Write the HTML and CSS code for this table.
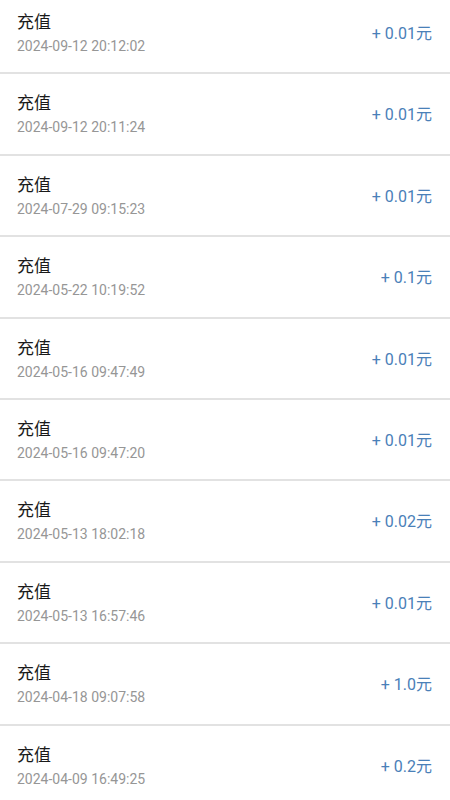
FILE: index.html
```html
<!DOCTYPE html>
<html lang="zh">
<head>
<meta charset="utf-8">
<title>充值记录</title>
<link rel="stylesheet" href="styles.css">
</head>
<body>
<ul class="list">
  <li class="row"><div class="info"><div class="title">充值</div><div class="date">2024-09-12 20:12:02</div></div><div class="amount">+ 0.01元</div></li>
  <li class="row"><div class="info"><div class="title">充值</div><div class="date">2024-09-12 20:11:24</div></div><div class="amount">+ 0.01元</div></li>
  <li class="row"><div class="info"><div class="title">充值</div><div class="date">2024-07-29 09:15:23</div></div><div class="amount">+ 0.01元</div></li>
  <li class="row"><div class="info"><div class="title">充值</div><div class="date">2024-05-22 10:19:52</div></div><div class="amount">+ 0.1元</div></li>
  <li class="row"><div class="info"><div class="title">充值</div><div class="date">2024-05-16 09:47:49</div></div><div class="amount">+ 0.01元</div></li>
  <li class="row"><div class="info"><div class="title">充值</div><div class="date">2024-05-16 09:47:20</div></div><div class="amount">+ 0.01元</div></li>
  <li class="row"><div class="info"><div class="title">充值</div><div class="date">2024-05-13 18:02:18</div></div><div class="amount">+ 0.02元</div></li>
  <li class="row"><div class="info"><div class="title">充值</div><div class="date">2024-05-13 16:57:46</div></div><div class="amount">+ 0.01元</div></li>
  <li class="row"><div class="info"><div class="title">充值</div><div class="date">2024-04-18 09:07:58</div></div><div class="amount">+ 1.0元</div></li>
  <li class="row"><div class="info"><div class="title">充值</div><div class="date">2024-04-09 16:49:25</div></div><div class="amount">+ 0.2元</div></li>
</ul>
</body>
</html>
```

FILE: styles.css
```css
html, body {
  margin: 0;
  padding: 0;
  background: #ffffff;
}
body {
  font-family: Roboto, "Noto Sans CJK SC", sans-serif;
}
.list {
  list-style: none;
  margin: -7px 0 0;
  padding: 0;
}
.row {
  box-sizing: border-box;
  height: 81.4px;
  padding: 17px 18px 0 17px;
  border-bottom: 2px solid #e2e2e2;
  display: flex;
  align-items: flex-start;
  justify-content: space-between;
}
.info {
  display: flex;
  flex-direction: column;
}
.title {
  font-size: 17px;
  line-height: 24px;
  color: #1a1a1a;
}
.date {
  font-size: 14px;
  line-height: 24px;
  color: #969696;
}
.amount {
  margin-top: 12px;
  font-size: 16px;
  line-height: 24px;
  color: #4a80b8;
}
```
